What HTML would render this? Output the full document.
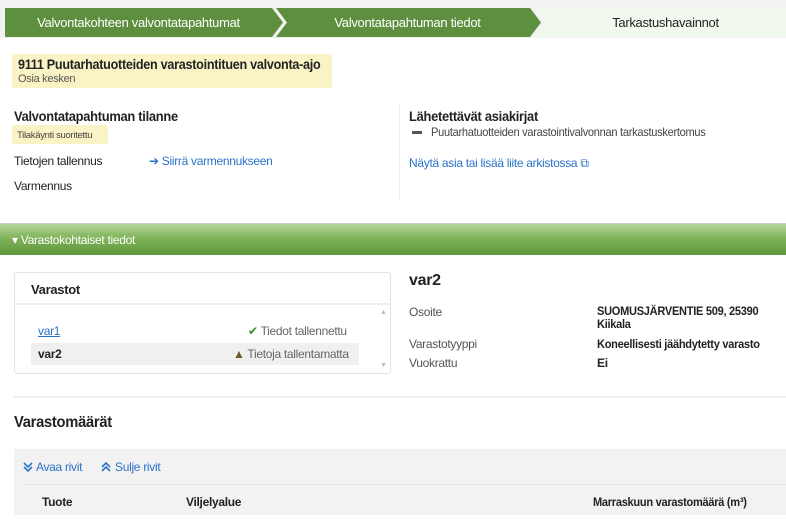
<!DOCTYPE html>
<html><head><meta charset="utf-8"><style>
*{margin:0;padding:0;box-sizing:border-box}
body{width:786px;height:526px;overflow:hidden;background:#fff;font-family:"Liberation Sans",sans-serif;color:#222;position:relative;letter-spacing:-0.3px}
.a{position:absolute;white-space:nowrap}
.b{font-weight:bold}
.lnk{color:#2a73c9}
.n{transform:scaleX(0.92);transform-origin:0 0}
</style></head><body>
<div class="a" style="left:0;top:0;width:786px;height:38px;background:#f2f2f2"></div>
<svg class="a" style="left:0;top:0" width="786" height="38">
<polygon points="5,8 272,8 283,22.5 272,37 5,37" fill="#5e8f3f"/>
<polygon points="276,8 530,8 541,22.5 530,37 276,37 287,22.5" fill="#5e8f3f"/>
<polygon points="534,8 786,8 786,37 534,37 545,22.5" fill="#f1f9ee"/>
</svg>
<div class="a" style="left:5px;top:15px;width:267px;text-align:center;color:#fff;font-size:13px">Valvontakohteen valvontatapahtumat</div>
<div class="a" style="left:285px;top:15px;width:245px;text-align:center;color:#fff;font-size:13px">Valvontatapahtuman tiedot</div>
<div class="a" style="left:545px;top:15px;width:241px;text-align:center;color:#222;font-size:13px">Tarkastushavainnot</div>

<div class="a" style="left:12px;top:54px;width:320px;height:34px;background:#faf3c5;border-radius:3px"></div>
<div class="a b n" style="left:18px;top:56px;font-size:14px;transform:scaleX(0.9)">9111 Puutarhatuotteiden varastointituen valvonta-ajo</div>
<div class="a" style="left:18px;top:73px;font-size:11px;color:#555">Osia kesken</div>

<div class="a b n" style="left:14px;top:108px;font-size:14px">Valvontatapahtuman tilanne</div>
<div class="a" style="left:12px;top:125px;width:96px;height:19px;background:#faf3c5;border-radius:3px;font-size:9.5px;padding:5px 0 0 5px;color:#444">Tilakäynti suoritettu</div>
<div class="a" style="left:14px;top:154px;font-size:12px">Tietojen tallennus</div>
<div class="a lnk" style="left:149px;top:154px;font-size:12px">➔ Siirrä varmennukseen</div>
<div class="a" style="left:14px;top:179px;font-size:12px">Varmennus</div>
<div class="a" style="left:399px;top:105px;width:1px;height:94px;background:#eee"></div>
<div class="a b n" style="left:409px;top:108px;font-size:14px">Lähetettävät asiakirjat</div>
<div class="a" style="left:412px;top:131px;width:10px;height:3px;background:#555"></div>
<div class="a n" style="left:431px;top:125px;font-size:12px;color:#444">Puutarhatuotteiden varastointivalvonnan tarkastuskertomus</div>
<div class="a lnk" style="left:409px;top:156px;font-size:12px">Näytä asia tai lisää liite arkistossa ⧉</div>

<div class="a" style="left:0;top:223px;width:786px;height:32px;background:linear-gradient(#b5d59b,#7fb35a 45%,#5f963b);border-top:1px solid #ccc"></div>
<div class="a" style="left:12px;top:233px;color:#fff;font-size:12px">▾ Varastokohtaiset tiedot</div>

<div class="a" style="left:14px;top:272px;width:377px;height:102px;border:1px solid #e3e3e3;border-radius:3px"></div>
<div class="a" style="left:15px;top:303px;width:375px;height:2px;background:#eee"></div>
<div class="a b" style="left:31px;top:282px;font-size:13px">Varastot</div>
<div class="a" style="left:31px;top:343px;width:328px;height:22px;background:#f0f0f0"></div>
<div class="a" style="left:38px;top:324px;font-size:12px;color:#2a73c9;text-decoration:underline">var1</div>
<div class="a" style="left:248px;top:324px;font-size:12px;color:#666"><span style="color:#3a8a2a">✔</span> Tiedot tallennettu</div>
<div class="a b" style="left:38px;top:347px;font-size:12px">var2</div>
<div class="a" style="left:233px;top:347px;font-size:12px;color:#666"><span style="color:#6b5a2a">▲</span> Tietoja tallentamatta</div>
<div class="a" style="left:380px;top:309px;font-size:7px;color:#bbb">▲</div>
<div class="a" style="left:380px;top:362px;font-size:7px;color:#bbb">▼</div>

<div class="a b" style="left:409px;top:272px;font-size:16px">var2</div>
<div class="a" style="left:409px;top:305px;font-size:12px;color:#555">Osoite</div>
<div class="a b n" style="left:597px;top:305px;font-size:12px;line-height:13px">SUOMUSJÄRVENTIE 509, 25390<br>Kiikala</div>
<div class="a" style="left:409px;top:337px;font-size:12px;color:#555">Varastotyyppi</div>
<div class="a b n" style="left:597px;top:337px;font-size:12px">Koneellisesti jäähdytetty varasto</div>
<div class="a" style="left:409px;top:356px;font-size:12px;color:#555">Vuokrattu</div>
<div class="a b" style="left:597px;top:356px;font-size:12px">Ei</div>

<div class="a" style="left:14px;top:396px;width:772px;height:2px;background:#eee"></div>
<div class="a b n" style="left:14px;top:414px;font-size:16px">Varastomäärät</div>
<div class="a" style="left:14px;top:449px;width:772px;height:66px;background:#f2f2f2"></div>
<svg class="a" style="left:23px;top:461px" width="10" height="12"><path d="M1,2 L5,6 L9,2 M1,6 L5,10 L9,6" stroke="#2a73c9" stroke-width="1.6" fill="none"/></svg>
<div class="a lnk" style="left:36px;top:460px;font-size:12px">Avaa rivit</div>
<svg class="a" style="left:101px;top:461px" width="10" height="12"><path d="M1,6 L5,2 L9,6 M1,10 L5,6 L9,10" stroke="#2a73c9" stroke-width="1.6" fill="none"/></svg>
<div class="a lnk" style="left:115px;top:460px;font-size:12px">Sulje rivit</div>
<div class="a" style="left:23px;top:484px;width:763px;height:1px;background:#e2e2e2"></div>
<div class="a b" style="left:42px;top:495px;font-size:12px">Tuote</div>
<div class="a b" style="left:186px;top:495px;font-size:12px">Viljelyalue</div>
<div class="a b n" style="left:593px;top:495px;font-size:12px">Marraskuun varastomäärä (m³)</div>
</body></html>
